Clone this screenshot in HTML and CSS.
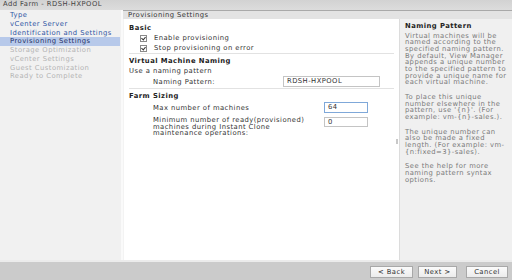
FILE: index.html
```html
<!DOCTYPE html>
<html lang="en">
<head>
    <meta charset="UTF-8">
    <title>Add Farm - RDSH-HXPOOL</title>
    <link rel="stylesheet" href="styles.css">
</head>
<body>

    <div class="dialog">

        <header class="title-bar">Add Farm - RDSH-HXPOOL</header>

        <div class="wizard">

            <nav class="steps">
                <div class="step done">Type</div>
                <div class="step done">vCenter Server</div>
                <div class="step done">Identification and Settings</div>
                <div class="step current">Provisioning Settings</div>
                <div class="step todo">Storage Optimization</div>
                <div class="step todo">vCenter Settings</div>
                <div class="step todo">Guest Customization</div>
                <div class="step todo">Ready to Complete</div>
            </nav>

            <section class="page">
                <div class="page-head">Provisioning Settings</div>

                <div class="page-body">
                    <div class="form">

                        <div class="group">
                            <div class="group-title">Basic</div>
                            <label class="check-row"><span class="check"></span>Enable provisioning</label>
                            <label class="check-row"><span class="check"></span>Stop provisioning on error</label>
                        </div>

                        <div class="group">
                            <div class="group-title">Virtual Machine Naming</div>
                            <div class="plain-row">Use a naming pattern</div>
                            <div class="field-row naming">
                                <span class="field-label">Naming Pattern:</span>
                                <span class="field wide">RDSH-HXPOOL</span>
                            </div>
                        </div>

                        <div class="group">
                            <div class="group-title">Farm Sizing</div>
                            <div class="field-row sizing">
                                <span class="field-label">Max number of machines</span>
                                <span class="field small focused">64</span>
                            </div>
                            <div class="field-row sizing multi">
                                <span class="field-label">Minimum number of ready(provisioned) machines during Instant Clone maintenance operations:</span>
                                <span class="field small">0</span>
                            </div>
                        </div>

                        <span class="splitter"></span>
                    </div>

                    <aside class="help">
                        <div class="help-title">Naming Pattern</div>
                        <p>Virtual machines will be<br>named according to the<br>specified naming pattern.<br>By default, View Manager<br>appends a unique number<br>to the specified pattern to<br>provide a unique name for<br>each virtual machine.</p>
                        <p>To place this unique<br>number elsewhere in the<br>pattern, use '{n}'. (For<br>example: vm-{n}-sales.).</p>
                        <p>The unique number can<br>also be made a fixed<br>length. (For example: vm-<br>{n:fixed=3}-sales).</p>
                        <p>See the help for more<br>naming pattern syntax<br>options.</p>
                    </aside>
                </div>
            </section>

        </div>

        <footer class="button-bar">
            <button class="btn btn-back">&lt; Back</button>
            <button class="btn btn-next">Next &gt;</button>
            <button class="btn btn-cancel">Cancel</button>
        </footer>

    </div>

</body>
</html>
```

FILE: styles.css
```css
/* Basic setup */
:root {
    --text: #333333;
    --text-muted: #7a7a7a;
    --link: #2f55a4;
    --disabled: #b4b4b4;
    --nav-bg: #f1f1f1;
    --band-bg: #e3e3e3;
    --help-bg: #f0f0f0;
    --line: #e2e2e2;
    --bar-bg: #cbcbcb;
}

* {
    margin: 0;
    padding: 0;
    box-sizing: border-box;
}

/* the shot is squeezed vertically, so a smaller size + tracking keeps the widths */
html, body {
    width: 512px;
    height: 280px;
    overflow: hidden;
    font-family: "DejaVu Sans", Verdana, sans-serif;
    font-size: 6.8px;
    letter-spacing: 0.45px;
    color: var(--text);
}

.dialog {
    display: flex;
    flex-direction: column;
    height: 280px;
    background: #ffffff;
}

/* Window title */
.title-bar {
    height: 10px;
    line-height: 9px;
    padding-left: 3px;
    color: #444444;
    background: linear-gradient(#d2d2d2, #dcdcdc);
    flex-shrink: 0;
}

/* Wizard body: steps | page */
.wizard {
    display: flex;
    height: 250px;
    flex-shrink: 0;
}

.steps {
    width: 123px;
    padding-top: 1px;
    background: var(--nav-bg);
    border-right: 2px solid #fafafa;
    flex-shrink: 0;
}

.step {
    height: 8.75px;
    line-height: 8.75px;
    padding-left: 10px;
    white-space: nowrap;
}

.step.done { color: var(--link); }
.step.current {
    color: #1d2f66;
    background: #b7c9ea;
    margin-right: 1px;
}
.step.todo { color: var(--disabled); }

.page {
    flex-grow: 1;
    display: flex;
    flex-direction: column;
}

.page-head {
    height: 8px;
    line-height: 8px;
    padding-left: 5px;
    background: var(--band-bg);
    border-top: 1px solid #a9a9a9;
    box-sizing: content-box;
    flex-shrink: 0;
}

.page-body {
    flex-grow: 1;
    display: flex;
}

/* Form column */
.form {
    position: relative;
    flex-grow: 1;
    padding: 4px 5px 0 5px;
    border-left: 1px solid #f3f3f3;
}

.group + .group {
    border-top: 1px solid var(--line);
    padding-top: 2px;
}

.group-title {
    font-weight: 700;
    line-height: 10px;
    color: #222222;
}

.check-row {
    display: flex;
    align-items: center;
    height: 10px;
    padding-left: 11px;
}

.check {
    width: 7px;
    height: 7px;
    margin-right: 7px;
    border: 1px solid #8a8a8a;
    background: #ffffff;
    position: relative;
}

.check::after {
    content: "";
    position: absolute;
    left: 1px;
    top: 0;
    width: 2px;
    height: 3px;
    border: solid #333333;
    border-width: 0 1px 1px 0;
    transform: rotate(40deg);
}

.plain-row {
    line-height: 10px;
}

.field-row {
    display: flex;
    align-items: center;
    padding-left: 24px;
}

.field-row.naming {
    height: 11px;
    margin-bottom: 1px;
}

.field-row.naming .field-label { width: 130px; }

.field-row.sizing {
    height: 11px;
    margin-top: 1px;
}

.field-row.sizing .field-label { width: 171px; }

.field-row.multi {
    height: auto;
    align-items: flex-start;
    margin-top: 4px;
}

.field-row.multi .field-label {
    line-height: 6.67px;
    padding-right: 10px;
}

.field {
    height: 11px;
    line-height: 9px;
    padding-left: 3px;
    border: 1px solid #c4c4c4;
    background: #ffffff;
}

.field.wide { width: 97px; }
.field.small { width: 44px; }
.field-row.multi .field { height: 10px; line-height: 8px; }
.field.focused { border-color: #7fa8d9; }

/* small grip on the divider */
.splitter {
    position: absolute;
    right: 1px;
    top: 120px;
    width: 2px;
    height: 5px;
    background: #c8c8c8;
}

/* Help column */
.help {
    width: 113px;
    padding: 2px 2px 0 5px;
    background: var(--help-bg);
    border-left: 1px solid #dcdcdc;
    flex-shrink: 0;
}

.help-title {
    font-weight: 700;
    line-height: 10px;
    color: #222222;
}

.help p {
    margin-top: 8px;
    line-height: 6.67px;
    color: var(--text-muted);
    white-space: nowrap;
}

.help p:first-of-type { margin-top: 1.7px; }

/* Bottom buttons */
.button-bar {
    flex-grow: 1;
    display: flex;
    justify-content: flex-end;
    align-items: flex-start;
    padding: 4px 4px 0 0;
    background: var(--bar-bg);
    border-top: 2px solid #ebebeb;
}

.btn {
    height: 12px;
    font-family: inherit;
    font-size: 6.8px;
    letter-spacing: 0.45px;
    color: #333333;
    background: linear-gradient(#fbfbfb, #ececec);
    border: 1px solid #a8a8a8;
}

.btn-back { width: 43px; }
.btn-next { width: 39px; margin-left: 5px; }
.btn-cancel { width: 42px; margin-left: 9px; }
```
